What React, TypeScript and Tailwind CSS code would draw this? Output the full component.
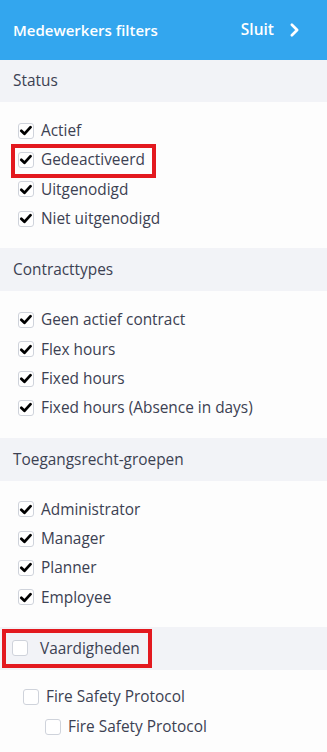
import React from "react";

const font = { fontFamily: '"Open Sans", "Noto Sans", sans-serif' };

function Check({ checked }: { checked: boolean }) {
  return (
    <span className="flex h-4 w-4 shrink-0 items-center justify-center rounded-[3px] border border-[#cfd3db] bg-white">
      {checked && (
        <svg viewBox="0 0 16 16" className="h-[15px] w-[15px]">
          <path d="M2.6 8.4 L6.2 11.8 L13.2 4.2" fill="none" stroke="#000" strokeWidth="3.2" strokeLinecap="round" strokeLinejoin="round" />
        </svg>
      )}
    </span>
  );
}

function Row({ label, checked = true, boxed = false }: { label: string; checked?: boolean; boxed?: boolean }) {
  return (
    <div className="relative flex h-[29.33px] items-center gap-[7px] pl-[18px]">
      <Check checked={checked} />
      <span className="text-[15.4px] text-[#3c4152]">{label}</span>
      {boxed && (
        <div className="pointer-events-none absolute left-[11px] top-[-1px] h-[34px] w-[145px] border-4 border-[#e3191f]" />
      )}
    </div>
  );
}

function SectionHeader({ title, first = false }: { title: string; first?: boolean }) {
  return (
    <div className={`flex items-center bg-[#f2f3f7] pl-[13px] text-[15.4px] text-[#3c4152] ${first ? "h-[42px]" : "h-[43px]"}`}>{title}</div>
  );
}

function Section({ title, items, boxedIndex, first = false }: { title: string; items: string[]; boxedIndex?: number; first?: boolean }) {
  return (
    <div>
      <SectionHeader title={title} first={first} />
      <div className="bg-[#fdfdfd] pt-[14px] pb-[15px]">
        {items.map((it, i) => (
          <Row key={it} label={it} boxed={i === boxedIndex} />
        ))}
      </div>
    </div>
  );
}

export default function App() {
  return (
    <div className="h-[752px] w-[327px] overflow-hidden bg-[#fdfdfd]" style={font}>
      <div className="flex h-[60px] items-center justify-between bg-[#33a6ee] pl-[13px] pr-[28px] text-white">
        <span className="text-[15px] font-semibold">Medewerkers filters</span>
        <span className="flex items-center gap-[16px] text-[15.5px] font-semibold">
          Sluit
          <svg viewBox="0 0 10 16" className="h-[14px] w-[9px]">
            <path d="M2 2 L8 8 L2 14" fill="none" stroke="#fff" strokeWidth="3" strokeLinecap="round" strokeLinejoin="round" />
          </svg>
        </span>
      </div>
      <Section first title="Status" items={["Actief", "Gedeactiveerd", "Uitgenodigd", "Niet uitgenodigd"]} boxedIndex={1} />
      <Section title="Contracttypes" items={["Geen actief contract", "Flex hours", "Fixed hours", "Fixed hours (Absence in days)"]} />
      <Section title="Toegangsrecht-groepen" items={["Administrator", "Manager", "Planner", "Employee"]} />
      <div className="relative flex h-[43px] items-center gap-[12px] bg-[#f2f3f7] pl-[12px] text-[15.4px] text-[#3c4152]">
        <Check checked={false} />
        <span>Vaardigheden</span>
        <div className="pointer-events-none absolute left-[2px] top-[2px] h-[39px] w-[150px] border-[4.5px] border-[#e3191f]" />
      </div>
      <div className="bg-[#fdfdfd] pt-[12px]">
        <div className="flex h-[30px] items-center gap-[7px] pl-[23px] text-[15.4px] text-[#3c4152]">
          <Check checked={false} />
          <span>Fire Safety Protocol</span>
        </div>
        <div className="flex h-[30px] items-center gap-[7px] pl-[45px] text-[15.4px] text-[#3c4152]">
          <Check checked={false} />
          <span>Fire Safety Protocol</span>
        </div>
      </div>
    </div>
  );
}
